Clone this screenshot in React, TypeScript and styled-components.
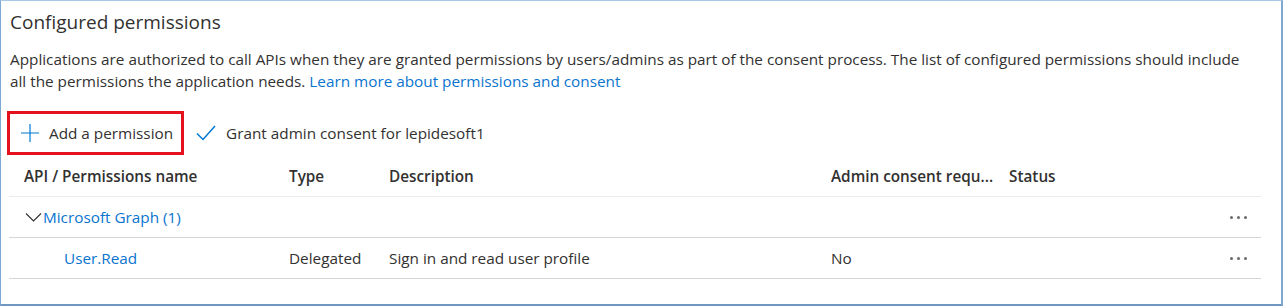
import styled, { createGlobalStyle } from "styled-components";

const GlobalStyle = createGlobalStyle`
    html, body {
        margin: 0;
        padding: 0;
        background: #ffffff;
    }
    body {
        font-family: "Open Sans", "Noto Sans", "Liberation Sans", sans-serif;
        color: #323130;
    }
`;

const Frame = styled.section`
    box-sizing: border-box;
    width: 1283px;
    height: 306px;
    border-top: 1px solid #a9c9e8;
    border-left: 1px solid #7ea9d2;
    border-right: 2px solid #7ea9d2;
    border-bottom: 2px solid #6f98c0;
    padding: 8px 21px 0 9px;
    background: #fff;
`;

const Title = styled.h2`
    margin: 0;
    font-size: 19px;
    font-weight: 400;
    line-height: 26px;
    color: #323130;
`;

const Intro = styled.p`
    margin: 13px 0 0;
    font-size: 15.3px;
    line-height: 22px;
    color: #323130;
`;

const Link = styled.a`
    color: #0a74cf;
    text-decoration: none;
    cursor: pointer;
`;

const Toolbar = styled.div`
    display: flex;
    align-items: center;
    margin-top: 19px;
    margin-left: -3px;
    height: 44px;
`;

const ToolButton = styled.button<{ $highlight?: boolean }>`
    display: flex;
    align-items: center;
    gap: 9px;
    box-sizing: border-box;
    height: 44px;
    padding: 0 8px 0 ${({ $highlight }) => ($highlight ? "10px" : "8px")};
    border: 3px solid ${({ $highlight }) => ($highlight ? "#e3121e" : "transparent")};
    background: transparent;
    font-family: inherit;
    font-size: 15.3px;
    color: #323130;
    cursor: pointer;
`;

const Table = styled.div`
    margin-top: 1px;
    margin-left: -1px;
    width: 1252px;
`;

const Row = styled.div<{ $header?: boolean }>`
    display: grid;
    grid-template-columns: 280px 100px 442px 178px 1fr 44px;
    align-items: center;
    height: 40px;
    border-bottom: 1px solid ${({ $header }) => ($header ? "#edebe9" : "#d6d6d6")};
    font-size: 15.3px;
    font-weight: ${({ $header }) => ($header ? 600 : 400)};
    color: #323130;
`;

const Cell = styled.div<{ $indent?: number }>`
    padding-left: ${({ $indent }) => $indent ?? 0}px;
    white-space: nowrap;
    overflow: hidden;
    text-overflow: ellipsis;
    display: flex;
    align-items: center;
`;

const GroupLink = styled(Link)`
    display: flex;
    align-items: center;
    gap: 1px;
`;

const More = styled.span`
    display: flex;
    gap: 4px;
    justify-content: flex-end;
    padding-right: 14px;

    i {
        width: 3px;
        height: 3px;
        border-radius: 50%;
        background: #6a6a6a;
    }
`;

const Dots = () => (
    <More>
        <i />
        <i />
        <i />
    </More>
);

const PlusIcon = () => (
    <svg width="20" height="20" viewBox="0 0 20 20">
        <path d="M10 1v18M1 10h18" stroke="#0078d4" strokeWidth="1.2" fill="none" />
    </svg>
);

const CheckIcon = () => (
    <svg width="22" height="20" viewBox="0 0 22 20">
        <path d="M2 10.5l6 6L20 3" stroke="#0078d4" strokeWidth="1.5" fill="none" />
    </svg>
);

const Chevron = () => (
    <svg width="17" height="10" viewBox="0 0 17 10">
        <path d="M1 1.5l7.5 7.5L16 1.5" stroke="#323130" strokeWidth="1.1" fill="none" />
    </svg>
);

const permissions = [
    {
        name: "User.Read",
        type: "Delegated",
        description: "Sign in and read user profile",
        adminConsent: "No",
        status: "",
    },
];

export default function App() {
    return (
        <>
            <GlobalStyle />
            <Frame>
                <Title>Configured permissions</Title>
                <Intro>
                    Applications are authorized to call APIs when they are granted permissions by users/admins as part of the consent process. The list of configured permissions should include
                    <br />
                    all the permissions the application needs. <Link>Learn more about permissions and consent</Link>
                </Intro>

                <Toolbar>
                    <ToolButton $highlight>
                        <PlusIcon />
                        Add a permission
                    </ToolButton>
                    <ToolButton>
                        <CheckIcon />
                        Grant admin consent for lepidesoft1
                    </ToolButton>
                </Toolbar>

                <Table>
                    <Row $header>
                        <Cell $indent={15}>API / Permissions name</Cell>
                        <Cell>Type</Cell>
                        <Cell>Description</Cell>
                        <Cell>Admin consent requ...</Cell>
                        <Cell>Status</Cell>
                        <Cell />
                    </Row>
                    <Row>
                        <Cell $indent={16}>
                            <GroupLink>
                                <Chevron />
                                Microsoft Graph (1)
                            </GroupLink>
                        </Cell>
                        <Cell />
                        <Cell />
                        <Cell />
                        <Cell />
                        <Dots />
                    </Row>
                    {permissions.map((p, key) => (
                        <Row key={key}>
                            <Cell $indent={55}>
                                <Link>{p.name}</Link>
                            </Cell>
                            <Cell>{p.type}</Cell>
                            <Cell>{p.description}</Cell>
                            <Cell>{p.adminConsent}</Cell>
                            <Cell>{p.status}</Cell>
                            <Dots />
                        </Row>
                    ))}
                </Table>
            </Frame>
        </>
    );
}
